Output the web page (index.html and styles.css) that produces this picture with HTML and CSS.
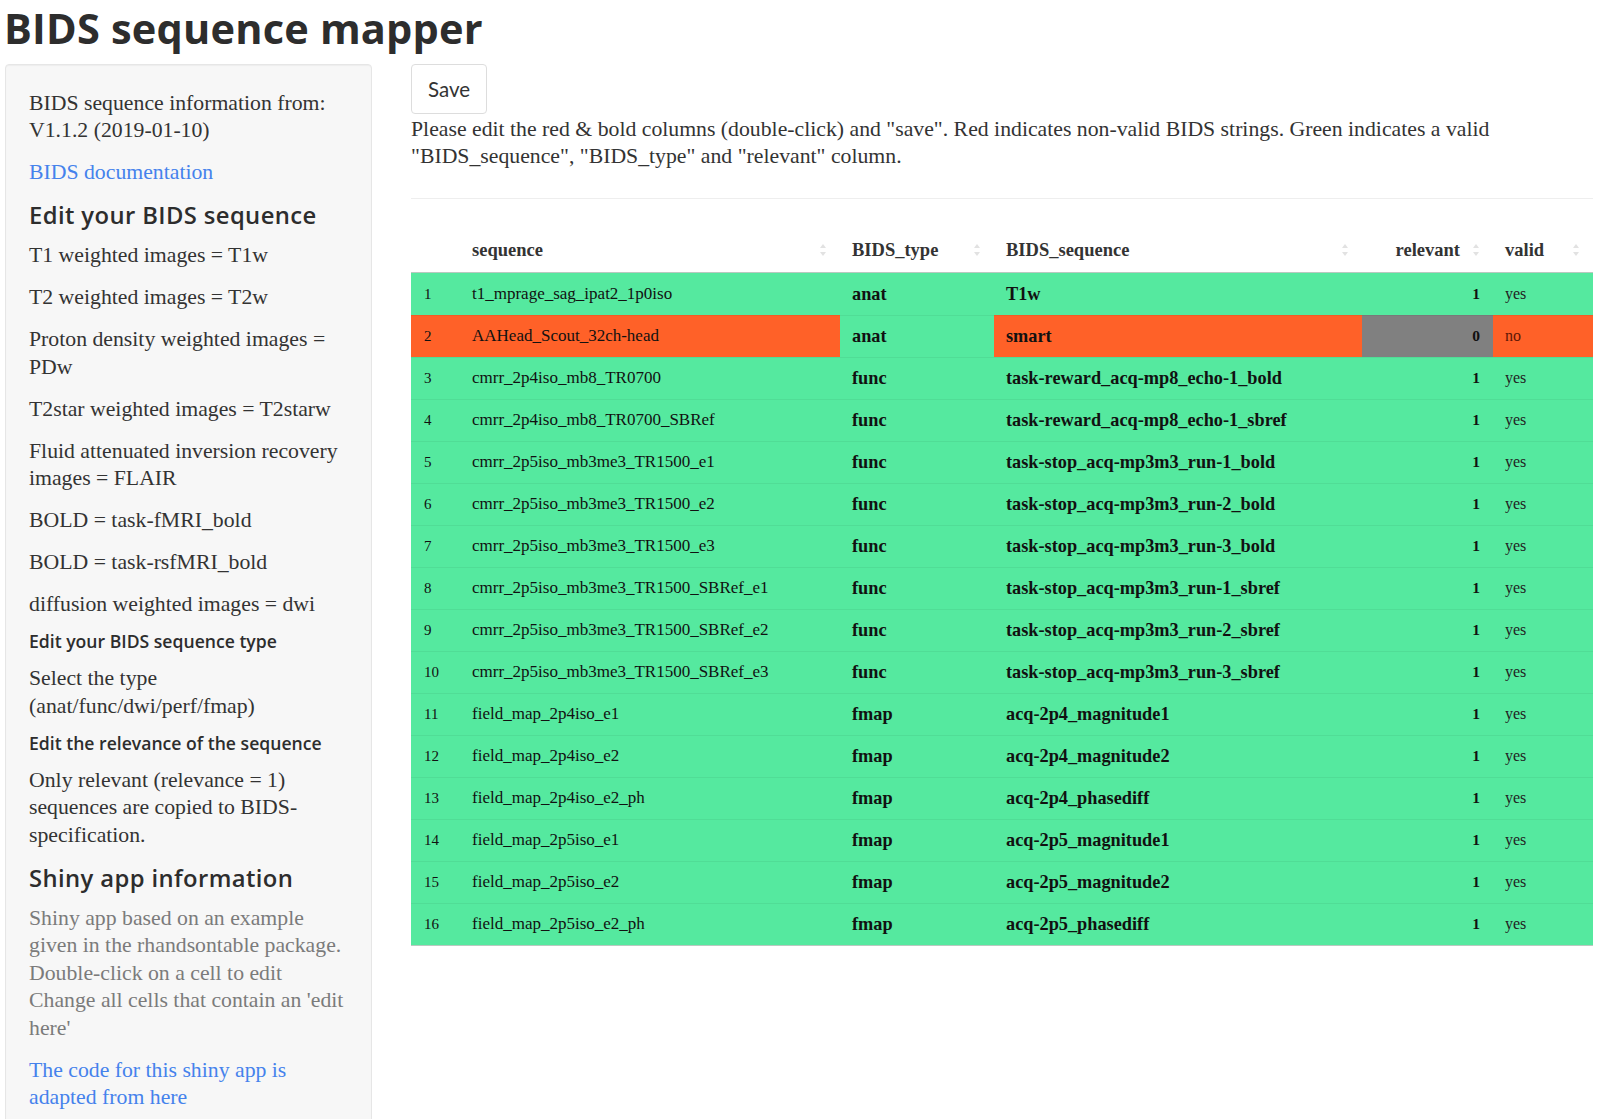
FILE: index.html
```html
<!DOCTYPE html>
<html lang="en">
<head>
<meta charset="utf-8">
<title>BIDS sequence mapper</title>
<link rel="stylesheet" href="styles.css">
</head>
<body>
<h1 class="title">BIDS sequence mapper</h1>
<div class="layout">
  <aside class="well">
    <p class="txt">BIDS sequence information from:<br>V1.1.2 (2019-01-10)</p>
    <p class="txt"><a class="link" href="#">BIDS documentation</a></p>
    <h4 class="h4">Edit your BIDS sequence</h4>
    <p class="txt">T1 weighted images = T1w</p>
    <p class="txt">T2 weighted images = T2w</p>
    <p class="txt">Proton density weighted images =<br>PDw</p>
    <p class="txt">T2star weighted images = T2starw</p>
    <p class="txt">Fluid attenuated inversion recovery<br>images = FLAIR</p>
    <p class="txt">BOLD = task-fMRI_bold</p>
    <p class="txt">BOLD = task-rsfMRI_bold</p>
    <p class="txt">diffusion weighted images = dwi</p>
    <h5 class="h5">Edit your BIDS sequence type</h5>
    <p class="txt">Select the type<br>(anat/func/dwi/perf/fmap)</p>
    <h5 class="h5">Edit the relevance of the sequence</h5>
    <p class="txt">Only relevant (relevance = 1)<br>sequences are copied to BIDS-<br>specification.</p>
    <h4 class="h4">Shiny app information</h4>
    <p class="txt muted">Shiny app based on an example<br>given in the rhandsontable package.<br>Double-click on a cell to edit<br>Change all cells that contain an 'edit<br>here'</p>
    <p class="txt"><a class="link" href="#">The code for this shiny app is<br>adapted from here</a></p>
  </aside>
  <main class="main">
    <button class="btn" type="button">Save</button>
    <p class="note">Please edit the red &amp; bold columns (double-click) and "save". Red indicates non-valid BIDS strings. Green indicates a valid<br>"BIDS_sequence", "BIDS_type" and "relevant" column.</p>
    <hr class="rule">
    <table class="grid">
      <colgroup>
        <col class="c-num"><col class="c-seq"><col class="c-type"><col class="c-bseq"><col class="c-rel"><col class="c-valid">
      </colgroup>
      <thead>
        <tr>
          <th class="h-num"></th>
          <th class="sort">sequence</th>
          <th class="sort">BIDS_type</th>
          <th class="sort">BIDS_sequence</th>
          <th class="sort right">relevant</th>
          <th class="sort">valid</th>
        </tr>
      </thead>
      <tbody>
        <tr><td class="num">1</td><td>t1_mprage_sag_ipat2_1p0iso</td><td class="b">anat</td><td class="b">T1w</td><td class="b right">1</td><td class="v">yes</td></tr>
        <tr><td class="num bad">2</td><td class="bad">AAHead_Scout_32ch-head</td><td class="b">anat</td><td class="b bad">smart</td><td class="b right off">0</td><td class="v bad">no</td></tr>
        <tr><td class="num">3</td><td>cmrr_2p4iso_mb8_TR0700</td><td class="b">func</td><td class="b">task-reward_acq-mp8_echo-1_bold</td><td class="b right">1</td><td class="v">yes</td></tr>
        <tr><td class="num">4</td><td>cmrr_2p4iso_mb8_TR0700_SBRef</td><td class="b">func</td><td class="b">task-reward_acq-mp8_echo-1_sbref</td><td class="b right">1</td><td class="v">yes</td></tr>
        <tr><td class="num">5</td><td>cmrr_2p5iso_mb3me3_TR1500_e1</td><td class="b">func</td><td class="b">task-stop_acq-mp3m3_run-1_bold</td><td class="b right">1</td><td class="v">yes</td></tr>
        <tr><td class="num">6</td><td>cmrr_2p5iso_mb3me3_TR1500_e2</td><td class="b">func</td><td class="b">task-stop_acq-mp3m3_run-2_bold</td><td class="b right">1</td><td class="v">yes</td></tr>
        <tr><td class="num">7</td><td>cmrr_2p5iso_mb3me3_TR1500_e3</td><td class="b">func</td><td class="b">task-stop_acq-mp3m3_run-3_bold</td><td class="b right">1</td><td class="v">yes</td></tr>
        <tr><td class="num">8</td><td>cmrr_2p5iso_mb3me3_TR1500_SBRef_e1</td><td class="b">func</td><td class="b">task-stop_acq-mp3m3_run-1_sbref</td><td class="b right">1</td><td class="v">yes</td></tr>
        <tr><td class="num">9</td><td>cmrr_2p5iso_mb3me3_TR1500_SBRef_e2</td><td class="b">func</td><td class="b">task-stop_acq-mp3m3_run-2_sbref</td><td class="b right">1</td><td class="v">yes</td></tr>
        <tr><td class="num">10</td><td>cmrr_2p5iso_mb3me3_TR1500_SBRef_e3</td><td class="b">func</td><td class="b">task-stop_acq-mp3m3_run-3_sbref</td><td class="b right">1</td><td class="v">yes</td></tr>
        <tr><td class="num">11</td><td>field_map_2p4iso_e1</td><td class="b">fmap</td><td class="b">acq-2p4_magnitude1</td><td class="b right">1</td><td class="v">yes</td></tr>
        <tr><td class="num">12</td><td>field_map_2p4iso_e2</td><td class="b">fmap</td><td class="b">acq-2p4_magnitude2</td><td class="b right">1</td><td class="v">yes</td></tr>
        <tr><td class="num">13</td><td>field_map_2p4iso_e2_ph</td><td class="b">fmap</td><td class="b">acq-2p4_phasediff</td><td class="b right">1</td><td class="v">yes</td></tr>
        <tr><td class="num">14</td><td>field_map_2p5iso_e1</td><td class="b">fmap</td><td class="b">acq-2p5_magnitude1</td><td class="b right">1</td><td class="v">yes</td></tr>
        <tr><td class="num">15</td><td>field_map_2p5iso_e2</td><td class="b">fmap</td><td class="b">acq-2p5_magnitude2</td><td class="b right">1</td><td class="v">yes</td></tr>
        <tr><td class="num">16</td><td>field_map_2p5iso_e2_ph</td><td class="b">fmap</td><td class="b">acq-2p5_phasediff</td><td class="b right">1</td><td class="v">yes</td></tr>
      </tbody>
    </table>
  </main>
</div>
</body>
</html>
```

FILE: styles.css
```css
html, body {
  margin: 0;
  padding: 0;
  background: #ffffff;
}
body {
  font-family: "Liberation Serif", "Times New Roman", serif;
  color: #333333;
  overflow: hidden;
}
.title {
  margin: 0 0 8px 0;
  padding-left: 4px;
  font-family: "Open Sans", "Noto Sans", sans-serif;
  font-weight: 700;
  font-size: 41.5px;
  line-height: 56px;
  color: #2d2d2d;
  letter-spacing: 0.2px;
}
.layout {
  display: flex;
  align-items: flex-start;
  gap: 39px;
  padding: 0 13px 0 5px;
}
.well {
  flex: 0 0 367px;
  box-sizing: border-box;
  width: 367px;
  min-height: 1100px;
  display: flex;
  flex-direction: column;
  padding: 24.5px 16px 24px 23px;
  background: #f7f7f7;
  border: 1px solid #e6e6e6;
  border-radius: 4px;
  box-shadow: inset 0 1px 1px rgba(0, 0, 0, 0.04);
}
.txt {
  margin: 0 0 14.5px 0;
  font-size: 21.75px;
  line-height: 27.5px;
  white-space: nowrap;
}
.muted {
  color: #7b7b7b;
}
.link {
  color: #4582ec;
  text-decoration: none;
}
.h4 {
  margin: 0 0 13px 0;
  font-family: "Open Sans", "Noto Sans", sans-serif;
  font-weight: 600;
  font-size: 23.8px;
  line-height: 28px;
  color: #2d2d2d;
  letter-spacing: 0.4px;
  white-space: nowrap;
}
.h5 {
  margin: 0 0 15px 0;
  font-family: "Open Sans", "Noto Sans", sans-serif;
  font-weight: 600;
  font-size: 17.6px;
  line-height: 17px;
  color: #2d2d2d;
  white-space: nowrap;
}
.main {
  flex: 0 0 1182px;
  width: 1182px;
  display: flex;
  flex-direction: column;
  align-items: flex-start;
}
.btn {
  box-sizing: border-box;
  width: 76px;
  height: 50px;
  margin: 0;
  padding: 0;
  background: #ffffff;
  border: 1px solid #dddddd;
  border-radius: 4px;
  font-family: "Lato", "Open Sans", sans-serif;
  font-size: 20.5px;
  font-weight: 400;
  color: #333333;
}
.note {
  margin: 1.5px 0 0 0;
  font-size: 21.75px;
  line-height: 27.5px;
  white-space: nowrap;
}
.rule {
  align-self: stretch;
  margin: 27.5px 0 0 0;
  height: 0;
  border: 0;
  border-top: 1px solid #eeeeee;
}
.grid {
  margin-top: 29px;
  width: 1182px;
  table-layout: fixed;
  border-collapse: separate;
  border-spacing: 0;
  color: #111111;
}
.c-num { width: 49px; }
.c-seq { width: 380px; }
.c-type { width: 154px; }
.c-bseq { width: 368px; }
.c-rel { width: 131px; }
.c-valid { width: 100px; }
.grid th {
  position: relative;
  height: 44px;
  padding: 0 30px 0 12px;
  text-align: left;
  font-size: 18.5px;
  font-weight: 700;
  color: #333333;
  border-bottom: 1px solid #b9c9c0;
  white-space: nowrap;
  vertical-align: middle;
}
.grid th.right {
  text-align: right;
  padding-right: 33px;
}
.grid th.sort::before,
.grid th.sort::after {
  content: "";
  position: absolute;
  right: 14px;
  width: 0;
  height: 0;
  border-left: 3px solid transparent;
  border-right: 3px solid transparent;
}
.grid th.sort::before {
  top: 16px;
  border-bottom: 4px solid #e2e2e2;
}
.grid th.sort::after {
  top: 24px;
  border-top: 4px solid #e2e2e2;
}
.grid td {
  height: 42px;
  padding: 0 12px;
  background: #55e99f;
  font-size: 17px;
  white-space: nowrap;
  overflow: hidden;
  vertical-align: middle;
  box-shadow: inset 0 1px 0 rgba(0, 0, 0, 0.05);
}
.grid tbody tr:first-child td {
  box-shadow: none;
}
.grid tbody tr:last-child td {
  border-bottom: 1px solid #b9c9c0;
}
.grid td.num {
  padding-left: 13px;
  font-size: 15px;
}
.grid td.b {
  font-weight: 700;
  font-size: 18.3px;
}
.grid td.b.right {
  text-align: right;
  padding-right: 13px;
  font-size: 15.5px;
}
.grid td.v {
  font-size: 16px;
  color: #222222;
}
.grid td.bad {
  background: #ff6128;
}
.grid td.v.bad {
  color: #5c1606;
}
.grid td.off {
  background: #808080;
}
```
